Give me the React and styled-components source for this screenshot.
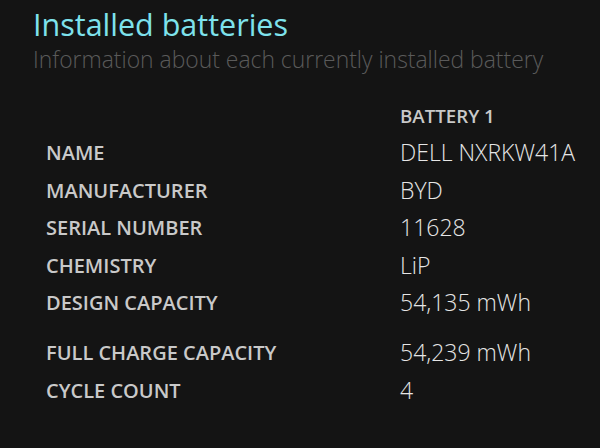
import React from "react";
import styled, {createGlobalStyle} from "styled-components";

const GlobalStyle = createGlobalStyle`
    html, body {
        margin: 0;
        padding: 0;
        background: #141414;
    }
    body {
        font-family: "Open Sans", "Noto Sans", sans-serif;
    }
`;

const Page = styled.div`
    width: 600px;
    height: 448px;
    box-sizing: border-box;
    padding: 4px 0 0 33px;
    background: #141414;
    overflow: hidden;
`;

const Title = styled.h1`
    margin: 0;
    font-size: 30.5px;
    font-weight: 400;
    line-height: 40px;
    color: #7ee2ec;
`;

const Subtitle = styled.p`
    margin: 1px 0 0;
    font-size: 22.9px;
    font-weight: 300;
    line-height: 30px;
    color: #5a5a5a;
`;

const Table = styled.div`
    display: grid;
    grid-template-columns: 354px auto;
    margin: 28px 0 0 13px;
`;

const Label = styled.div`
    font-size: 20px;
    font-weight: 600;
    line-height: 37.5px;
    color: #c9c9c9;
    margin-top: ${p => (p.$gap ? "12.5px" : "0")};
`;

const Value = styled.div`
    font-size: 23px;
    font-weight: 300;
    line-height: 37.5px;
    color: #e6e6e6;
    margin-top: ${p => (p.$gap ? "12.5px" : "0")};
`;

const ColumnHead = styled.div`
    grid-column: 2;
    font-size: 18.7px;
    font-weight: 600;
    line-height: 26px;
    color: #c9c9c9;
    margin-bottom: 5px;
`;

const rows = [
    ["NAME", "DELL NXRKW41A"],
    ["MANUFACTURER", "BYD"],
    ["SERIAL NUMBER", "11628"],
    ["CHEMISTRY", "LiP"],
    ["DESIGN CAPACITY", "54,135 mWh"],
    ["FULL CHARGE CAPACITY", "54,239 mWh", true],
    ["CYCLE COUNT", "4"],
];

export default function App() {
    return (
        <Page>
            <GlobalStyle/>
            <Title>Installed batteries</Title>
            <Subtitle>Information about each currently installed battery</Subtitle>
            <Table>
                <ColumnHead>BATTERY 1</ColumnHead>
                {rows.map(([label, value, gap]) => (
                    <React.Fragment key={label}>
                        <Label $gap={gap}>{label}</Label>
                        <Value $gap={gap}>{value}</Value>
                    </React.Fragment>
                ))}
            </Table>
        </Page>
    );
}
